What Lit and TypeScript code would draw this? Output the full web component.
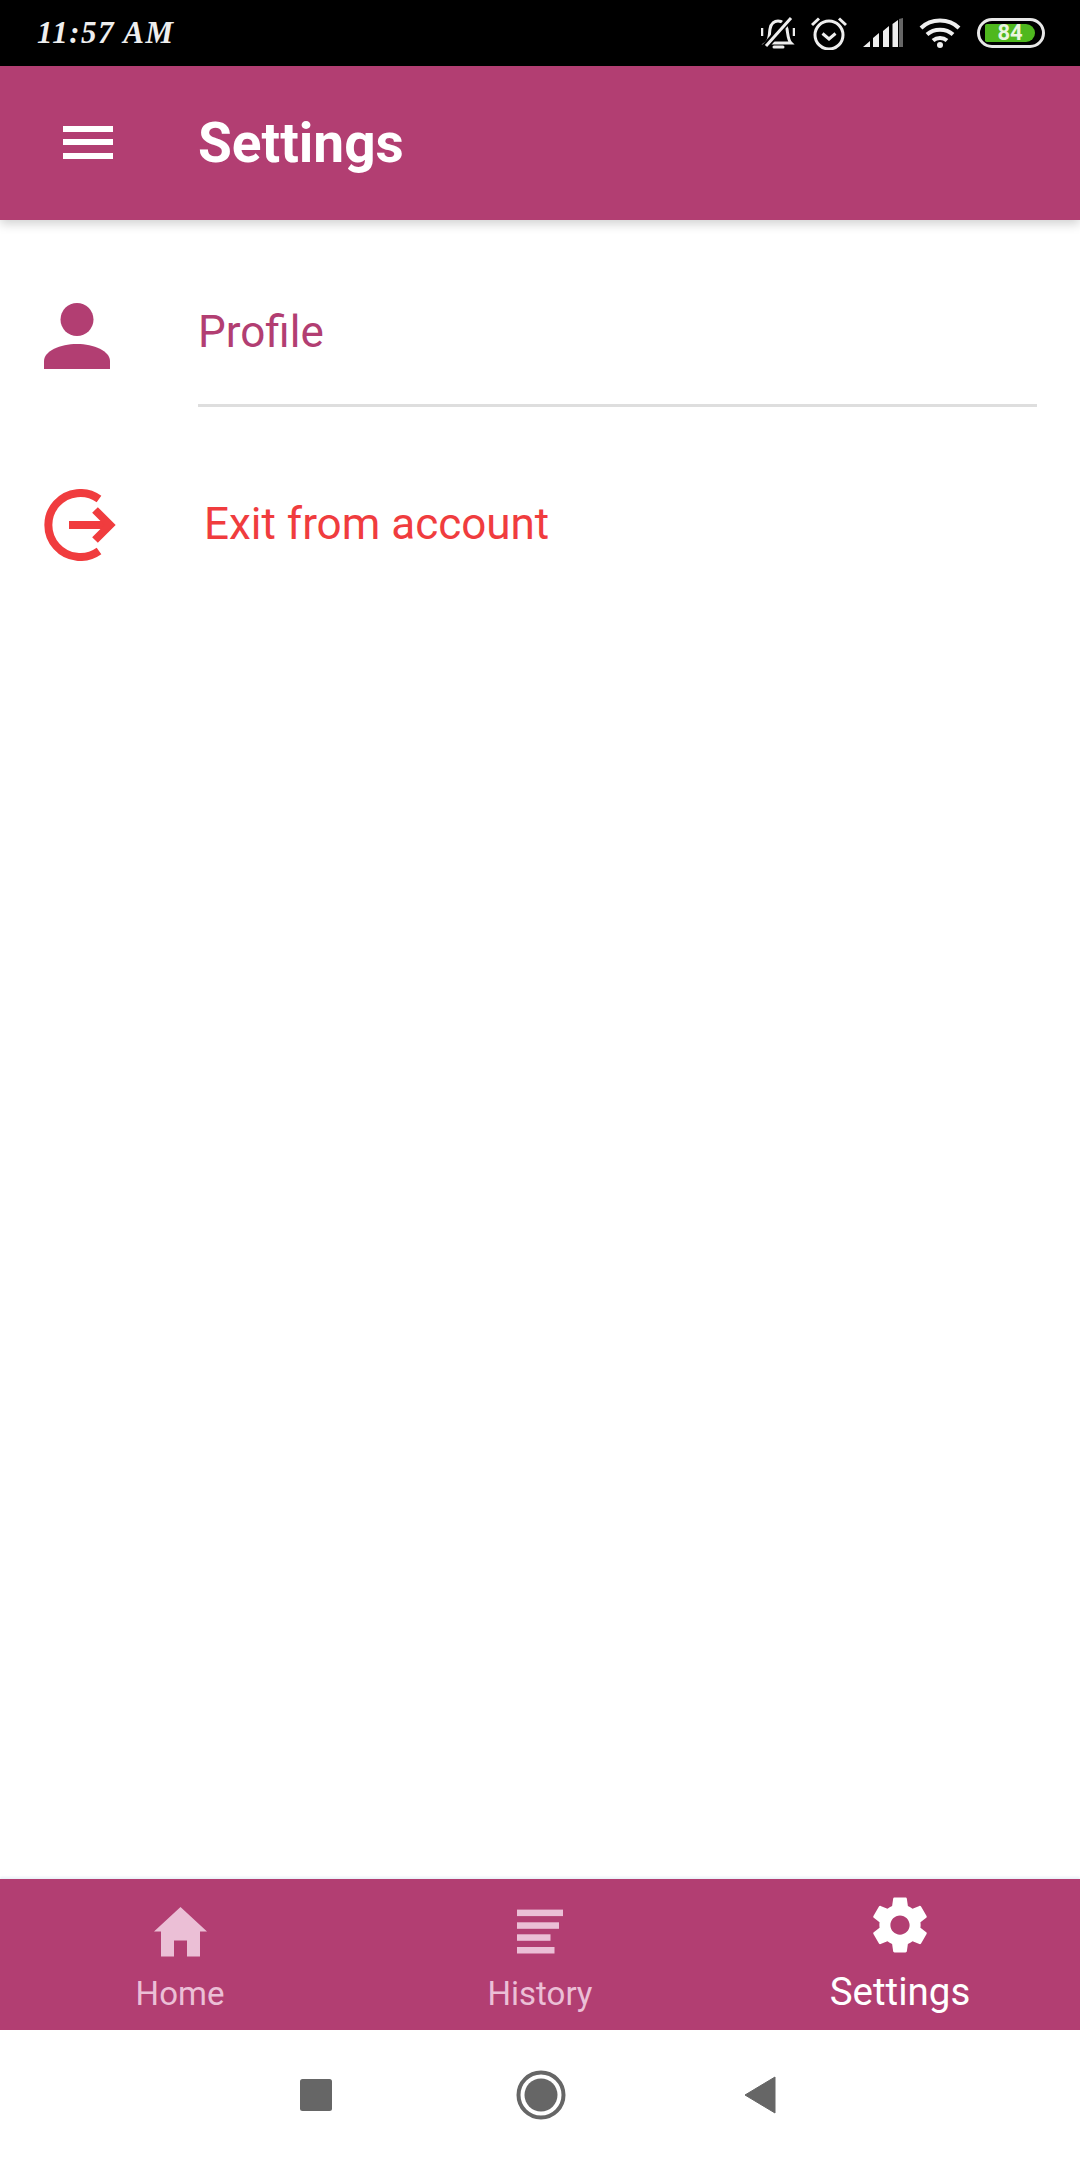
import { LitElement, html, css, svg } from 'lit';
import { customElement } from 'lit/decorators.js';

const GEAR =
	'M19.43 12.98c.04-.32.07-.64.07-.98s-.03-.66-.07-.98l2.11-1.65c.19-.15.24-.42.12-.64l-2-3.46c-.12-.22-.39-.3-.61-.22l-2.49 1c-.52-.4-1.08-.73-1.69-.98l-.38-2.65C14.46 2.18 14.25 2 14 2h-4c-.25 0-.46.18-.49.42l-.38 2.65c-.61.25-1.17.59-1.69.98l-2.49-1c-.23-.09-.49 0-.61.22l-2 3.46c-.13.22-.07.49.12.64l2.11 1.65c-.04.32-.07.65-.07.98s.03.66.07.98l-2.11 1.65c-.19.15-.24.42-.12.64l2 3.46c.12.22.39.3.61.22l2.49-1c.52.4 1.08.73 1.69.98l.38 2.65c.03.24.24.42.49.42h4c.25 0 .46-.18.49-.42l.38-2.65c.61-.25 1.17-.59 1.69-.98l2.49 1c.23.09.49 0 .61-.22l2-3.46c.12-.22.07-.49-.12-.64l-2.11-1.65zM12 15.5c-1.93 0-3.5-1.57-3.5-3.5s1.57-3.5 3.5-3.5 3.5 1.57 3.5 3.5-1.57 3.5-3.5 3.5z';

@customElement('app-root')
export class AppRoot extends LitElement {
	static styles = css`
		:host {
			display: block;
			width: 1080px;
			height: 2160px;
			font-family: Roboto, 'Noto Sans', sans-serif;
			background: #fff;
		}

		.page {
			display: flex;
			flex-direction: column;
			height: 100%;
		}

		.status-bar {
			flex: none;
			height: 66px;
			background: #000;
			display: flex;
			align-items: center;
			justify-content: space-between;
			padding: 0 35px 0 37px;
			box-sizing: border-box;
		}

		.time {
			font-family: 'Liberation Serif', serif;
			font-style: italic;
			font-weight: 700;
			font-size: 31px;
			letter-spacing: 1.5px;
			color: #eee;
			line-height: 66px;
		}

		.status-icons {
			display: flex;
			align-items: center;
			gap: 16px;
		}

		.status-icons svg {
			display: block;
		}

		.battery {
			width: 68px;
			height: 30px;
			box-sizing: border-box;
			border: 3px solid #e8e8e8;
			border-radius: 15px;
			padding: 3px 5px;
			display: flex;
		}

		.battery-fill {
			width: 50px;
			background: #4fb81e;
			border-radius: 2px 10px 10px 2px;
			color: #eaf5e0;
			font-size: 22px;
			font-weight: 700;
			line-height: 18px;
			text-align: center;
		}

		.app-bar {
			flex: none;
			height: 154px;
			background: #b23e72;
			box-shadow: 0 4px 10px rgba(0, 0, 0, 0.18);
			display: flex;
			align-items: center;
			padding-left: 63px;
			position: relative;
			color: #fff;
		}

		.menu {
			display: flex;
			flex-direction: column;
			gap: 7.5px;
			width: 50px;
			margin: 0 85px 2px 0;
		}

		.menu span {
			height: 6px;
			background: #fff;
		}

		.title {
			font-size: 55px;
			font-weight: 700;
		}

		.content {
			flex: 1;
		}

		.row {
			display: flex;
			align-items: flex-start;
			padding-left: 44px;
		}

		.row svg {
			display: block;
			flex: none;
		}

		.row-profile {
			height: 184px;
			color: #b23e72;
		}

		.row-profile svg {
			margin-top: 83px;
		}

		.row-exit {
			color: #f03c3e;
		}

		.row-exit svg {
			margin-top: 82px;
		}

		.row-label {
			font-size: 44px;
			line-height: 52px;
			margin-left: 88px;
		}

		.row-profile .row-label {
			margin-top: 86px;
		}

		.row-exit .row-label {
			margin-top: 91px;
		}

		.divider {
			height: 3px;
			background: #dedede;
			margin: 0 43px 0 198px;
		}

		.tabs {
			flex: none;
			height: 151px;
			background: #b23e72;
			box-shadow: 0 -2px 2px rgba(120, 160, 200, 0.15);
			display: grid;
			grid-template-columns: repeat(3, 1fr);
		}

		.tab {
			display: flex;
			flex-direction: column;
			align-items: center;
			color: #ebbfd6;
			padding-top: 28px;
		}

		.tab svg {
			display: block;
		}

		.tab-label {
			font-size: 33px;
			line-height: 38px;
			margin-top: 18px;
		}

		.tab-active {
			color: #fff;
			padding-top: 13px;
		}

		.tab-active .tab-label {
			font-size: 38.500px;
			line-height: 44px;
			margin-top: 12px;
		}

		.nav-bar {
			flex: none;
			height: 130px;
			background: #fff;
			display: flex;
			align-items: center;
			padding-left: 300px;
		}

		.nav-bar svg {
			display: block;
		}

		.nav-circle {
			margin-left: 184px;
		}

		.nav-back {
			margin-left: 178px;
		}
	`;

	private renderStatusIcons() {
		return html`<div class="status-icons">
			<svg width="34" height="34" viewBox="1 0 34 34" fill="none" stroke="#eee" stroke-width="3">
				<path d="M6 27 C10 24 9 19 10 13 C11 7 15 5 18 5 C22 5 26 8 27 13 C28 19 28 24 31 27 Z" />
				<path d="M14 31h9" stroke-width="3" stroke-linecap="round" />
				<path d="M2 12v8M34 12v8" stroke-width="2.5" />
				<path d="M5 31 L31 1" stroke="#000" stroke-width="7" />
				<path d="M6 30 L31 2" />
			</svg>
			<svg width="36" height="34" viewBox="1 0 36 34" fill="none" stroke="#eee" stroke-width="3">
				<circle cx="19" cy="19" r="14" />
				<path d="M12.5 17.5 L19 23 L25.5 17.5" />
				<path d="M2 9 L9 2.500M36 9 L29 2.500" />
			</svg>
			<svg width="40" height="30" viewBox="0 0 40 30">
				<path d="M0 29 L7 23 V29 Z M10 29 V20 L16 15 V29 Z M20 29 V13 L26 8 V29 Z" fill="#eee" />
				<path d="M29.500 29 V6 L35 2 V29 Z" fill="#eee" />
				<path d="M36 1 L40 0 V29 H36 Z" fill="#666" />
			</svg>
			<svg width="42" height="32" viewBox="0 0 42 32" fill="none" stroke="#eee" stroke-width="4">
				<path d="M2 11 C12 1 30 1 40 11" />
				<path d="M8 17.500 C15 11 27 11 34 17.500" />
				<path d="M14 23.500 C18 20 24 20 28 23.500" />
				<circle cx="21" cy="28" r="3" fill="#eee" stroke="none" />
			</svg>
			<div class="battery"><div class="battery-fill">84</div></div>
		</div>`;
	}

	private renderProfileIcon() {
		return html`<svg width="66" height="66" viewBox="0 0 66 66" fill="currentColor">
			<ellipse cx="33" cy="16.500" rx="16.500" ry="16.500" />
			<path d="M0 66 V58 C0 48 16 41 33 41 C50 41 66 48 66 58 V66 Z" />
		</svg>`;
	}

	private renderExitIcon() {
		return html`<svg width="72" height="72" viewBox="0 0 72 72" fill="none" stroke="currentColor" stroke-width="8">
			<path d="M55 10 A32 32 0 1 0 55 62" />
			<path d="M25 36 H64" />
			<path d="M51 21 L66 36 L51 51" />
		</svg>`;
	}

	private renderTabs() {
		return html`<div class="tabs">
			<div class="tab">
				<svg width="53" height="50" viewBox="0 0 53 50" fill="currentColor">
					<path d="M26.500 0 L53 24.500 H46 V49.500 H33 V33.500 H20 V49.500 H7 V24.500 H0 Z" />
				</svg>
				<span class="tab-label">Home</span>
			</div>
			<div class="tab">
				<svg width="46" height="50" viewBox="0 0 46 50" fill="currentColor">
					<rect x="0" y="2.600" width="46" height="6.500" />
					<rect x="0" y="15.300" width="42" height="6.500" />
					<rect x="0" y="27.300" width="33.500" height="6.500" />
					<rect x="0" y="40" width="37.500" height="6.500" />
				</svg>
				<span class="tab-label">History</span>
			</div>
			<div class="tab tab-active">
				<svg width="66" height="66" viewBox="0 0 24 24" fill="currentColor">${svg`<path d=${GEAR} />`}</svg>
				<span class="tab-label">Settings</span>
			</div>
		</div>`;
	}

	render() {
		return html`<div class="page">
			<div class="status-bar">
				<span class="time">11:57 AM</span>
				${this.renderStatusIcons()}
			</div>
			<header class="app-bar">
				<div class="menu"><span></span><span></span><span></span></div>
				<span class="title">Settings</span>
			</header>
			<main class="content">
				<div class="row row-profile">
					${this.renderProfileIcon()}
					<span class="row-label">Profile</span>
				</div>
				<div class="divider"></div>
				<div class="row row-exit">
					${this.renderExitIcon()}
					<span class="row-label">Exit from account</span>
				</div>
			</main>
			${this.renderTabs()}
			<div class="nav-bar">
				<svg width="32" height="32" viewBox="0 0 32 32"><rect width="32" height="32" rx="2.500" fill="#666" /></svg>
				<svg class="nav-circle" width="50" height="50" viewBox="0 0 50 50">
					<circle cx="25" cy="25" r="22.500" fill="none" stroke="#666" stroke-width="4" />
					<circle cx="25" cy="25" r="16.500" fill="#666" />
				</svg>
				<svg class="nav-back" width="32" height="38" viewBox="0 0 32 38">
					<path d="M31 1 V37 L1 19 Z" fill="#666" stroke="#666" stroke-width="1" stroke-linejoin="round" />
				</svg>
			</div>
		</div>`;
	}
}
